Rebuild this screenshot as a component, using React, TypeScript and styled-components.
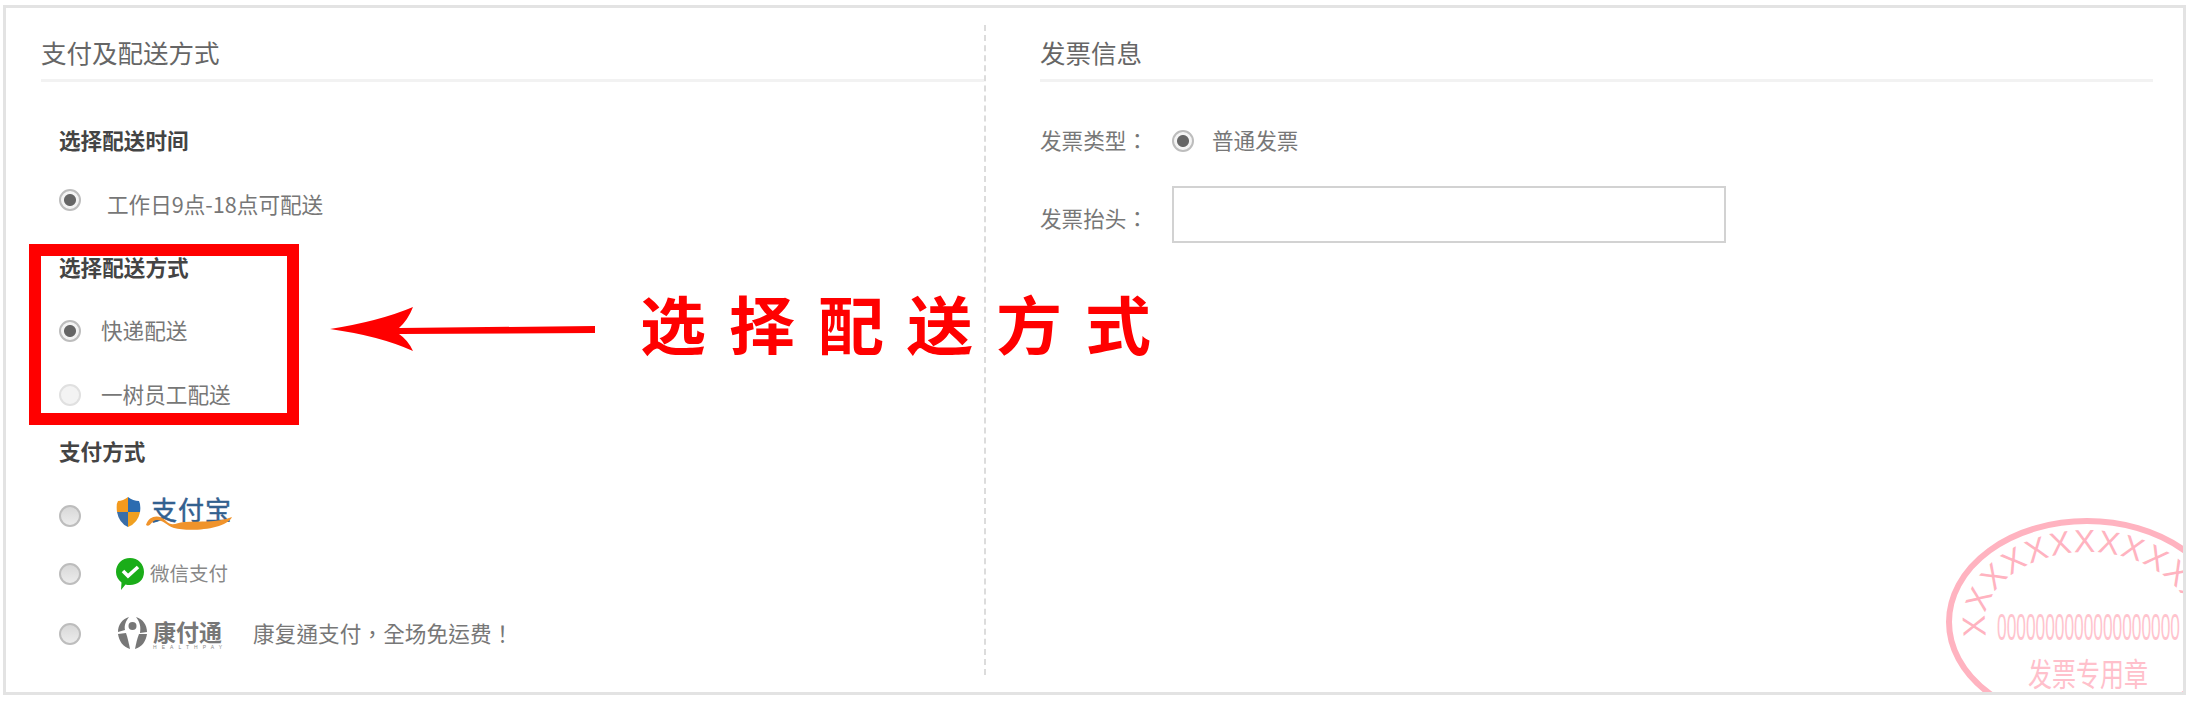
import React from 'react';
import styled, {createGlobalStyle} from "styled-components";

const cjk = `"Noto Sans CJK SC", "Noto Sans", sans-serif`;
const cjkCentered = `"Noto Sans CJK TC", "Noto Sans CJK SC", sans-serif`;

const GlobalStyle = createGlobalStyle`
    html, body {
        margin: 0;
        padding: 0;
        background: #fff;
        font-family: ${cjk};
    }
`
const Frame = styled.section`
    position: relative;
    box-sizing: border-box;
    display: flex;
    align-items: flex-start;
    width: 2183px;
    height: 690px;
    margin: 5px 0 0 3px;
    padding: 17px 30px 0 35px;
    border: 3px solid #e3e3e3;
    overflow: hidden;
`
const LeftPane = styled.div`
    flex: 0 0 943px;
`
const RightPane = styled.div`
    flex: 1;
    height: 650px;
    padding-left: 54px;
    border-left: 2px dashed #dcdcdc;
`
const PaneTitle = styled.h2`
    box-sizing: border-box;
    height: 57px;
    margin: 0;
    font-size: 25.5px;
    line-height: 54px;
    font-weight: 400;
    color: #666;
    border-bottom: 3px solid #f2f2f2;
`
const Row = styled.div<{$top: number; $gap?: number}>`
    display: flex;
    align-items: center;
    gap: ${props => props.$gap ?? 20}px;
    height: 30px;
    margin-top: ${props => props.$top}px;
    padding-left: 18px;
`
const SectionHead = styled.h3<{$top: number}>`
    height: 30px;
    margin: ${props => props.$top}px 0 0;
    padding-left: 18px;
    font-size: 21.6px;
    line-height: 28px;
    font-weight: 700;
    color: #444;
`
const Label = styled.span<{$drop?: number}>`
    padding-top: ${props => props.$drop ?? 0}px;
    padding-bottom: 2px;
    font-size: 21.6px;
    line-height: 30px;
    color: #777;
    white-space: nowrap;
`
const Radio = styled.span<{$state: 'on' | 'off' | 'disabled'}>`
    flex: none;
    box-sizing: border-box;
    width: 22px;
    height: 22px;
    border-radius: 50%;
    border: 2px solid ${props => props.$state === 'disabled' ? '#e0e0e0' : '#bdbdbd'};
    background: ${props => props.$state === 'on'
        ? 'radial-gradient(circle, #666 0 5.5px, #f4f4f4 6.5px 100%)'
        : props.$state === 'off' ? 'linear-gradient(#d8d8d8, #ececec)' : '#f3f3f3'};
`
const FieldRow = styled.div<{$top: number}>`
    display: flex;
    align-items: center;
    margin-top: ${props => props.$top}px;
`
const FieldLabel = styled(Label)`
    width: 132px;
    font-family: ${cjkCentered};
`
const FieldRadioRow = styled.div`
    display: flex;
    align-items: center;
    gap: 18px;
`
const TextInput = styled.input`
    box-sizing: border-box;
    width: 554px;
    height: 57px;
    margin: 0;
    border: 2px solid #d2d2d2;
    background: #fff;
`
const Logo = styled.svg`
    display: block;
    flex: none;
    overflow: visible;
`
const LogoWrap = styled.span<{$lift?: number}>`
    display: flex;
    margin-bottom: ${props => props.$lift ?? 0}px;
`
const PayName = styled.span`
    margin-left: 6px;
    padding-bottom: 2px;
    font-size: 19.5px;
    color: #888;
    white-space: nowrap;
`
const PayNote = styled(Label)`
    margin-left: -6px;
    letter-spacing: 0.1px;
    font-family: ${cjkCentered};
`
const Highlight = styled.div`
    position: absolute;
    left: 23px;
    top: 236px;
    box-sizing: border-box;
    width: 270px;
    height: 181px;
    border: 12.5px solid #f00;
`
const Arrow = styled.svg`
    position: absolute;
    left: 324px;
    top: 296px;
`
const Callout = styled.div`
    position: absolute;
    left: 634px;
    top: 263px;
    font-size: 66px;
    line-height: 100px;
    font-weight: 700;
    letter-spacing: 23px;
    color: #f00;
    white-space: nowrap;
    transform: scaleY(0.95);
`
const Stamp = styled.svg`
    position: absolute;
    right: 0;
    bottom: 0;
`

const AlipayLogo = () => (
    <Logo width="116" height="32" viewBox="0 0 116 32">
        <path d="M12 0 L12 15 L1 15 Q0 7 2 4 Q7 4 12 0Z" fill="#f39a1e"/>
        <path d="M12 0 Q17 4 23 4 Q25 8 24 15 L12 15Z" fill="#2b6cb0"/>
        <path d="M1 15 L12 15 L12 30 Q3 26 1 15Z" fill="#3a6ea8"/>
        <path d="M12 15 L24 15 Q22 26 12 30Z" fill="#f0a020"/>
        <text x="35" y="23" fontSize="26" fontWeight="400" stroke="#33608f" strokeWidth="0.5" fill="#33608f" letterSpacing="1" fontFamily={cjk}>支付宝</text>
        <path d="M30 28 C33 18 44 17 50 24 C56 30 60 26 68 25 C84 24 100 26 116 20 C110 33 72 35 58 31 C50 28 46 22 40 23 C35 24 34 31 30 28Z" fill="#f0932b"/>
    </Logo>
);

const WechatLogo = () => (
    <Logo width="28" height="32" viewBox="0 0 28 32">
        <path d="M14 0 C22 0 28 6 28 14 C28 22 22 27 14 27 C12 27 11 27 9.5 26.500 L5 32 L5.500 24.500 C2 22 0 18 0 14 C0 6 6 0 14 0Z" fill="#1aad19"/>
        <path d="M7 13 L12 18 L22 9" fill="none" stroke="#fff" strokeWidth="3.600"/>
    </Logo>
);

const HealthpayLogo = () => (
    <Logo width="108" height="34" viewBox="0 0 108 34">
        <path d="M13 1 C6 3 2 9 2 16 L9 14 C8 9 10 5 13 1Z" fill="#777"/>
        <path d="M20 1 C27 3 31 9 31 16 L24 17 C25 11 24 6 20 1Z" fill="#777"/>
        <circle cx="16.500" cy="10" r="4" fill="#777"/>
        <path d="M2 18 L10 17 C12 23 13 28 14 33 C7 31 3 25 2 18Z" fill="#777"/>
        <path d="M31 18 L23 18 C21 23 20 28 19 33 C26 31 30 25 31 18Z" fill="#777"/>
        <text x="37" y="25" fontSize="23" fontWeight="700" fill="#777" fontFamily={cjk}>康付通</text>
        <text x="37" y="33" fontSize="5" fill="#888" textLength="69" fontFamily="'Liberation Sans', sans-serif">HEALTHPAY</text>
    </Logo>
);

const App = () => {
    return (
        <Frame>
            <GlobalStyle/>
            <LeftPane>
                <PaneTitle>支付及配送方式</PaneTitle>
                <SectionHead $top={44}>选择配送时间</SectionHead>
                <Row $top={29} $gap={26}>
                    <Radio $state="on"/>
                    <Label $drop={9}>工作日9点-18点可配送</Label>
                </Row>
                <SectionHead $top={38}>选择配送方式</SectionHead>
                <Row $top={33}>
                    <Radio $state="on"/>
                    <Label>快递配送</Label>
                </Row>
                <Row $top={34}>
                    <Radio $state="disabled"/>
                    <Label>一树员工配送</Label>
                </Row>
                <SectionHead $top={27}>支付方式</SectionHead>
                <Row $top={34} $gap={35}>
                    <Radio $state="off"/>
                    <LogoWrap $lift={6}><AlipayLogo/></LogoWrap>
                </Row>
                <Row $top={28} $gap={35}>
                    <Radio $state="off"/>
                    <LogoWrap>
                        <WechatLogo/>
                        <PayName>微信支付</PayName>
                    </LogoWrap>
                </Row>
                <Row $top={30} $gap={35}>
                    <Radio $state="off"/>
                    <LogoWrap $lift={2}><HealthpayLogo/></LogoWrap>
                    <PayNote>康复通支付，全场免运费！</PayNote>
                </Row>
            </LeftPane>
            <RightPane>
                <PaneTitle>发票信息</PaneTitle>
                <FieldRow $top={43}>
                    <FieldLabel>发票类型：</FieldLabel>
                    <FieldRadioRow>
                        <Radio $state="on"/>
                        <Label>普通发票</Label>
                    </FieldRadioRow>
                </FieldRow>
                <FieldRow $top={29}>
                    <FieldLabel $drop={9}>发票抬头：</FieldLabel>
                    <TextInput/>
                </FieldRow>
            </RightPane>
            <Highlight/>
            <Arrow width="275" height="56" viewBox="0 0 275 56">
                <path d="M0 25 Q50 17 83 3 Q78 16 69 24 L265 22 L265 29 L69 30 Q78 36 83 47 Q50 32 0 25Z" fill="#f00"/>
            </Arrow>
            <Callout>选择配送方式</Callout>
            <Stamp width="240" height="178" viewBox="0 0 240 178">
                <defs>
                    <path id="stamp-arc" d="M44 122 A102 70 0 1 1 244 122"/>
                </defs>
                <ellipse cx="144" cy="108" rx="138" ry="101" fill="none" stroke="#ffb3c0" strokeWidth="6"/>
                <text fontSize="32" fill="#ffb3c0" letterSpacing="1.5" fontFamily="'Liberation Sans', sans-serif">
                    <textPath href="#stamp-arc">XXXXXXXXXXXXXXXXXX</textPath>
                </text>
                <text x="54" y="126" fontSize="36" fill="#ffc4ce" textLength="183" lengthAdjust="spacingAndGlyphs" fontFamily="'Liberation Sans', sans-serif">0000000000000000000</text>
                <text x="85" y="172" fontSize="32" fill="#ffc0cb" textLength="120" lengthAdjust="spacingAndGlyphs" fontFamily={cjk}>发票专用章</text>
            </Stamp>
        </Frame>
    );
};

export default App;
